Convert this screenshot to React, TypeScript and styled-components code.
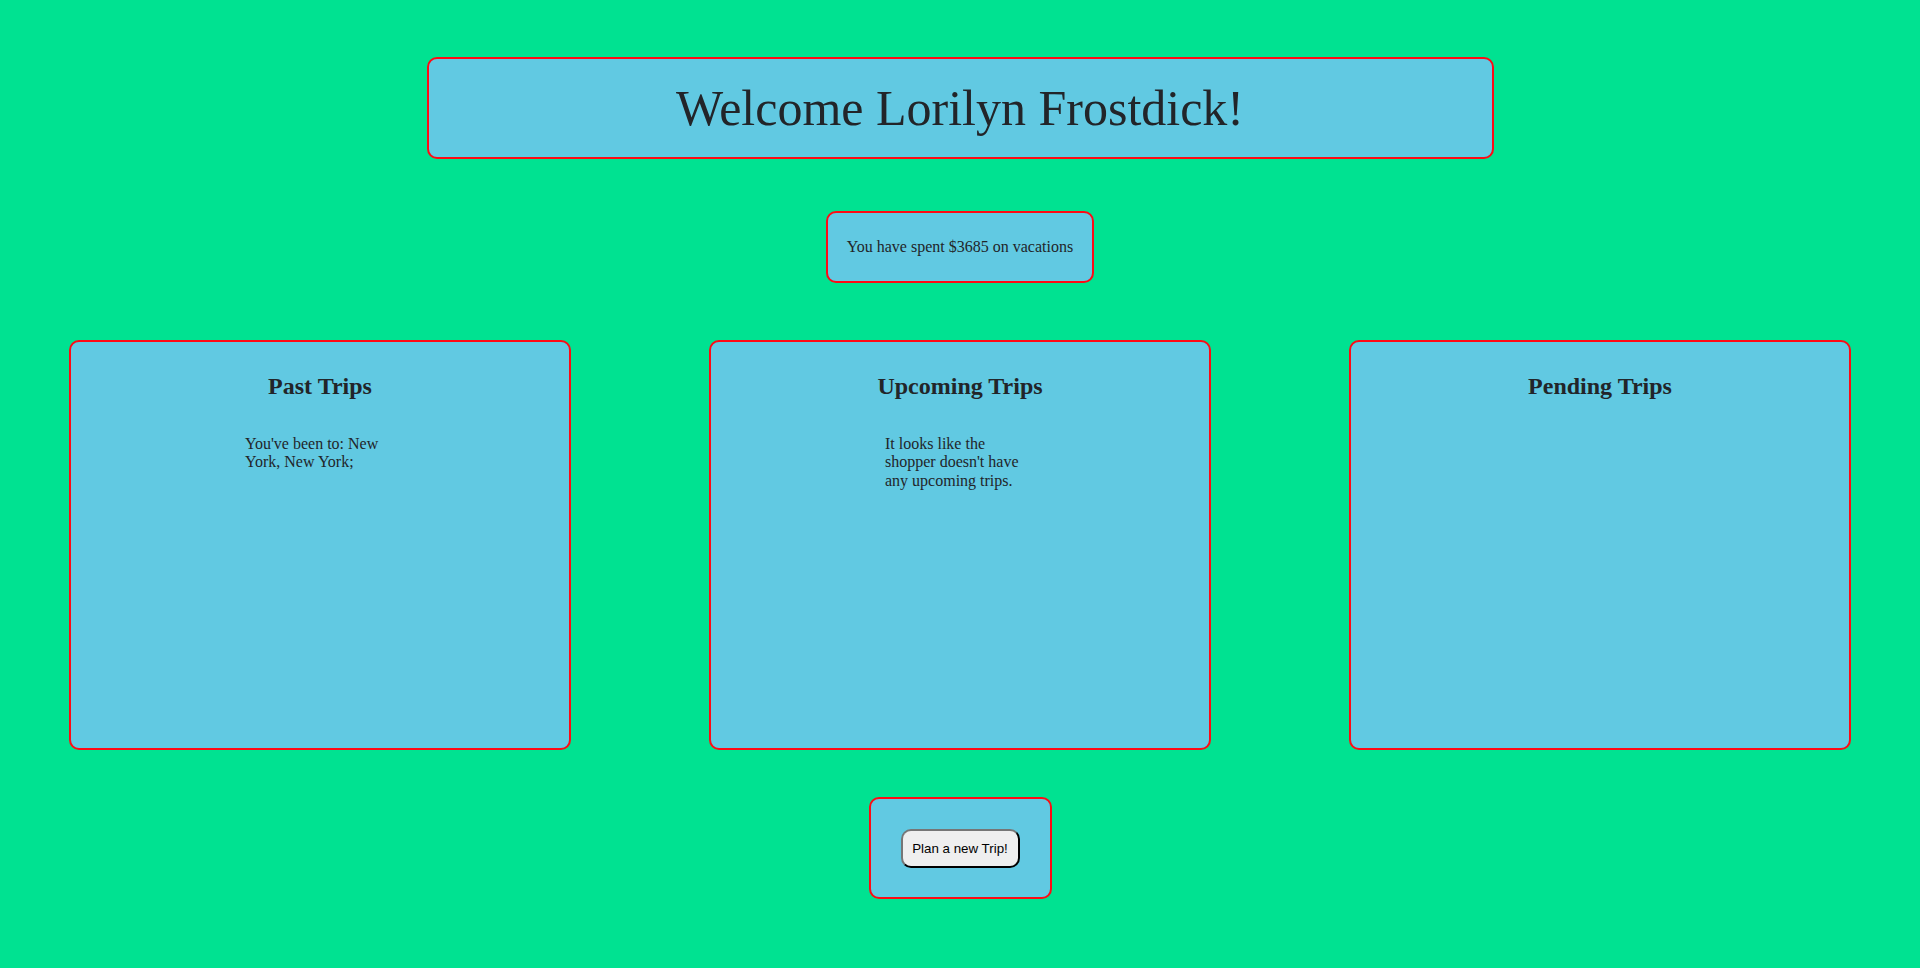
import styled, { createGlobalStyle } from 'styled-components';

const GlobalStyle = createGlobalStyle`
  html, body {
    margin: 0;
    padding: 0;
    background: #00e291;
  }
  body {
    font-family: "Liberation Serif", "Times New Roman", serif;
    color: #222529;
  }
`;

interface TripCard {
  title: string;
  text?: string;
}

const cards: TripCard[] = [
  { title: 'Past Trips', text: "You've been to: New York, New York;" },
  { title: 'Upcoming Trips', text: "It looks like the shopper doesn't have any upcoming trips." },
  { title: 'Pending Trips' },
];

export default function App() {
  return (
    <>
      <GlobalStyle />
      <Page>
        <Header>
          <Title>Welcome Lorilyn Frostdick!</Title>
        </Header>

        <SpentBox>You have spent $3685 on vacations</SpentBox>

        <CardRow>
          {cards.map(card => (
            <Card key={card.title}>
              <CardTitle>{card.title}</CardTitle>
              {card.text && <CardText>{card.text}</CardText>}
            </Card>
          ))}
        </CardRow>

        <ButtonBox>
          <PlanButton type="button">Plan a new Trip!</PlanButton>
        </ButtonBox>
      </Page>
    </>
  );
}

const Page = styled.div`
  display: flex;
  flex-direction: column;
  align-items: center;
  padding: 57px 0 60px;
  min-height: 968px;
  box-sizing: border-box;
`;

const Panel = styled.div`
  box-sizing: border-box;
  background: #61c9e2;
  border: 2px solid #ff0a14;
  border-radius: 10px;
`;

const Header = styled(Panel)`
  width: 1067px;
  height: 102px;
  display: flex;
  align-items: center;
  justify-content: center;
`;

const Title = styled.h1`
  margin: 0;
  font-size: 50px;
  font-weight: normal;
  line-height: 57px;
`;

const SpentBox = styled(Panel)`
  margin-top: 52px;
  width: 268px;
  height: 72px;
  display: flex;
  align-items: center;
  justify-content: center;
  font-size: 16px;
`;

const CardRow = styled.div`
  margin-top: 57px;
  width: 100%;
  display: flex;
  justify-content: space-around;
`;

const Card = styled(Panel)`
  width: 502px;
  height: 410px;
  padding-top: 30px;
`;

const CardTitle = styled.h2`
  margin: 0;
  font-size: 24px;
  line-height: 28px;
  font-weight: bold;
  text-align: center;
`;

const CardText = styled.p`
  width: 150px;
  margin: 35px auto 0;
  font-size: 16px;
  line-height: 18.4px;
`;

const ButtonBox = styled(Panel)`
  margin-top: 47px;
  width: 183px;
  height: 102px;
  display: flex;
  align-items: center;
  justify-content: center;
`;

const PlanButton = styled.button`
  box-sizing: border-box;
  width: 119px;
  height: 39px;
  padding: 0 8px;
  background: #efefef;
  border: 2px outset #767676;
  border-right-color: #222;
  border-bottom-color: #222;
  border-radius: 10px;
  font-family: "Liberation Sans", Arial, sans-serif;
  font-size: 13.33px;
  color: #000;
`;
